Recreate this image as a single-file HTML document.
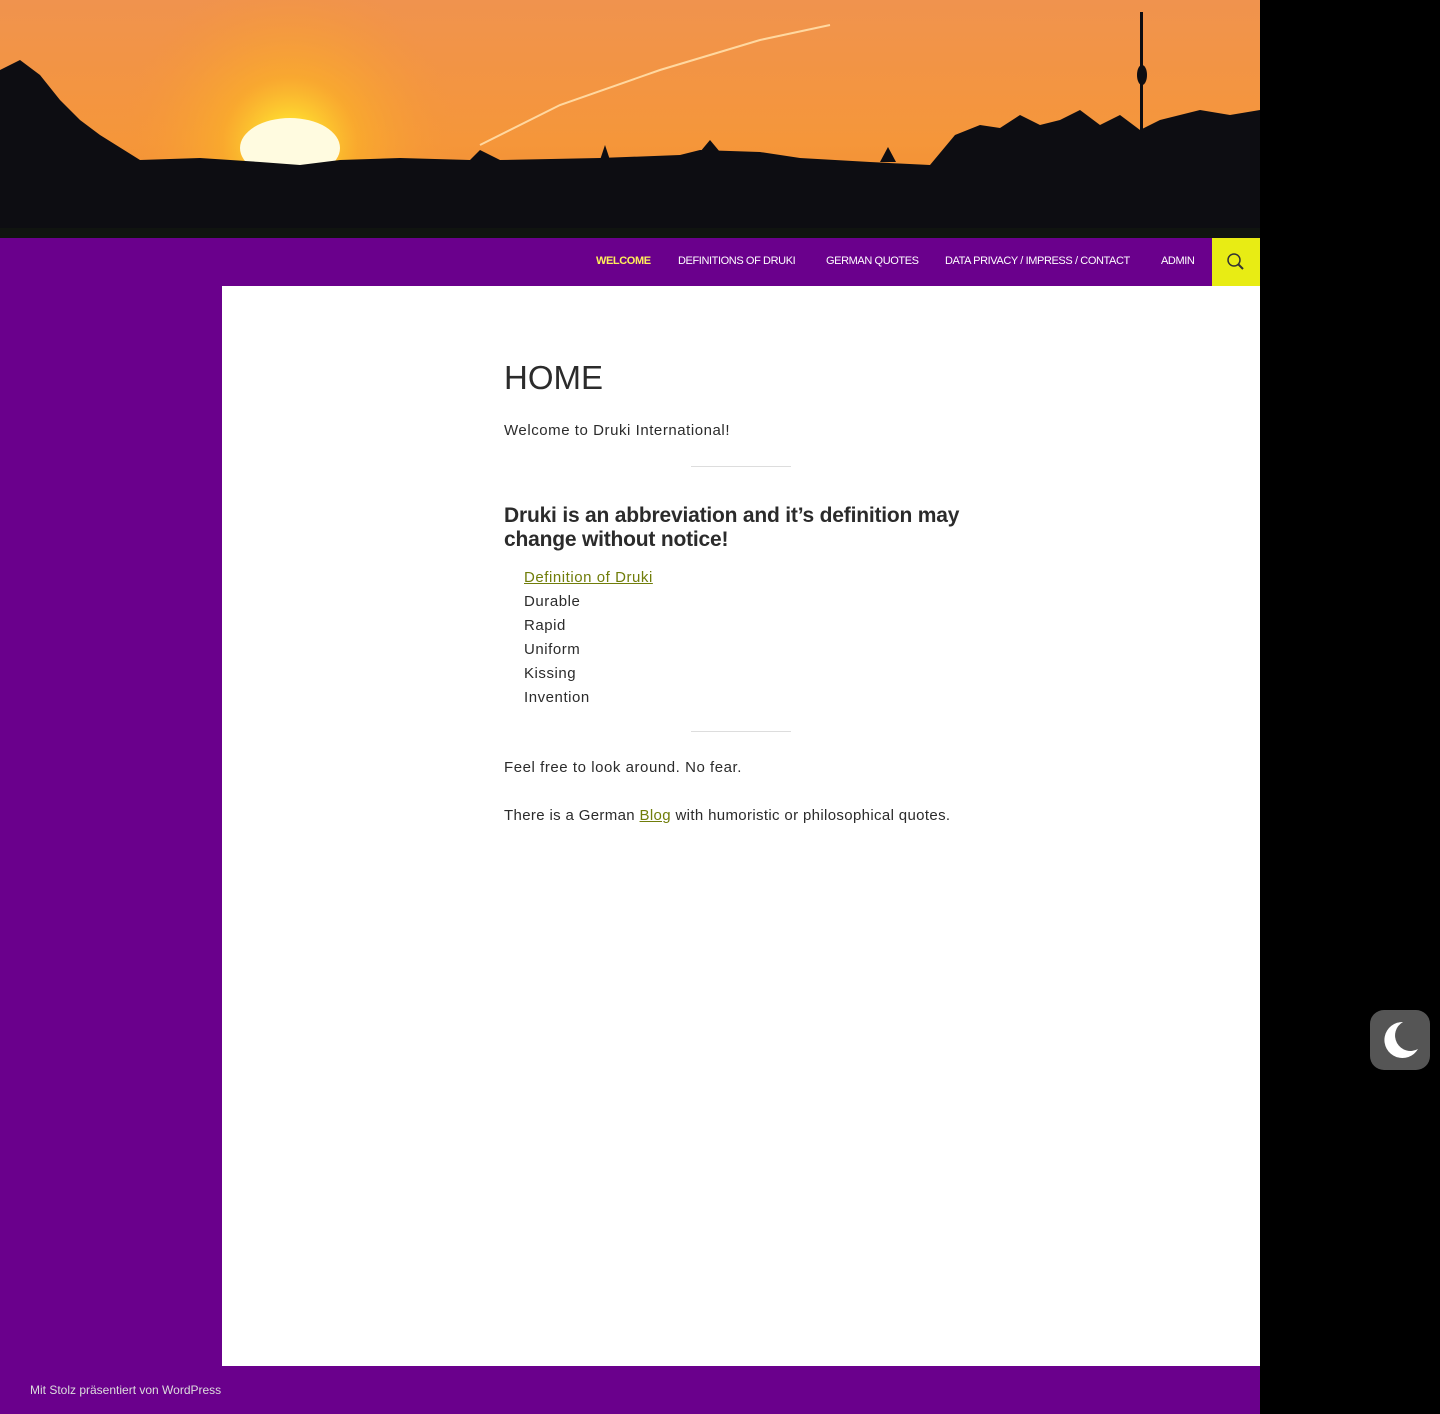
<!DOCTYPE html>
<html><head><meta charset="utf-8"><style>
html,body{margin:0;padding:0}
body{width:1440px;height:1414px;background:#000;position:relative;font-family:"Liberation Sans",sans-serif;overflow:hidden}
#hdr{position:absolute;left:0;top:0;width:1260px;height:238px}
#nav{position:absolute;left:0;top:238px;width:1260px;height:48px;background:#6a008c}
#nav a{position:absolute;top:17px;color:#fff;font-size:11px;text-decoration:none;letter-spacing:-0.4px}
#srch{position:absolute;left:1212px;top:0;width:48px;height:48px;background:#e8ec14}
#side{position:absolute;left:0;top:286px;width:222px;height:1128px;background:#6a008c}
#main{position:absolute;left:222px;top:286px;width:1038px;height:1080px;background:#fff}
#foot{position:absolute;left:222px;top:1366px;width:1038px;height:48px;background:#6a008c}
.c{position:absolute;left:504px;color:#2b2b2b;font-size:15px;letter-spacing:0.55px}
.hr{position:absolute;left:691px;width:100px;height:1px;background:#ddd}
a.l{color:#707d0a;text-decoration:underline}
#moon{position:absolute;left:1370px;top:1010px;width:60px;height:60px;background:#555;border-radius:14px}
</style></head><body>
<svg id="hdr" viewBox="0 0 1260 238" width="1260" height="238">
<defs>
<linearGradient id="sky" x1="0" y1="0" x2="0" y2="1"><stop offset="0" stop-color="#f0934e"/><stop offset="0.6" stop-color="#f5963a"/><stop offset="1" stop-color="#f08a2a"/></linearGradient>
<radialGradient id="sun" cx="290" cy="145" r="170" gradientUnits="userSpaceOnUse"><stop offset="0" stop-color="#fff8d0"/><stop offset="0.12" stop-color="#ffe030"/><stop offset="0.4" stop-color="#fbb028" stop-opacity="0.7"/><stop offset="1" stop-color="#f5963a" stop-opacity="0"/></radialGradient>
</defs>
<rect width="1260" height="238" fill="url(#sky)"/>
<rect width="1260" height="238" fill="url(#sun)"/>
<ellipse cx="290" cy="148" rx="50" ry="30" fill="#fffbe0"/>
<path d="M480 145 L560 105 L660 70 L760 40 L830 25" stroke="#ffd8a0" stroke-width="2" fill="none"/>
<path d="M0 238 L0 70 L20 60 L40 75 L60 100 L80 120 L100 135 L140 160 L200 158 L260 162 L300 165 L340 160 L400 158 L470 160 L480 150 L500 160 L600 158 L680 155 L700 150 L760 152 L800 158 L870 162 L930 165 L955 135 L980 125 L1000 128 L1020 115 L1040 125 L1060 120 L1080 110 L1100 125 L1120 115 L1140 130 L1160 120 L1200 110 L1230 115 L1260 110 L1260 238 Z" fill="#0d0d12"/>
<path d="M600 160 L605 145 L610 160 M700 152 L710 140 L720 152 M880 162 L888 147 L896 162" fill="#0d0d12"/>
<rect x="1140" y="12" width="3" height="130" fill="#0d0d12"/>
<ellipse cx="1142" cy="75" rx="5" ry="10" fill="#0d0d12"/>
<rect x="0" y="228" width="1260" height="10" fill="#101410"/>
</svg>
<div id="nav">
<a style="left:596px;color:#ffef5a;font-weight:bold">WELCOME</a>
<a style="left:678px">DEFINITIONS OF DRUKI</a>
<a style="left:826px">GERMAN QUOTES</a>
<a style="left:945px">DATA PRIVACY / IMPRESS / CONTACT</a>
<a style="left:1161px">ADMIN</a>
<div id="srch"><svg width="48" height="48"><circle cx="22" cy="22" r="6" stroke="#333" stroke-width="1.5" fill="none"/><path d="M26.5 26.5 L31 31" stroke="#333" stroke-width="2"/></svg></div>
</div>
<div id="side"></div>
<div id="main"></div>
<div id="foot"></div>
<div style="position:absolute;left:30px;top:1383px;color:#ddd;font-size:12px">Mit Stolz präsentiert von WordPress</div>
<div class="c" style="top:359px;font-size:33px;font-weight:300;letter-spacing:0px">HOME</div>
<div class="c" style="top:422px">Welcome to Druki International!</div>
<div class="hr" style="top:466px"></div>
<div class="c" style="top:504px;font-size:21px;font-weight:bold;line-height:24px;width:470px;letter-spacing:-0.2px">Druki is an abbreviation and it’s definition may change without notice!</div>
<div class="c" style="left:524px;top:566px;line-height:24px"><a class="l">Definition of Druki</a><br>Durable<br>Rapid<br>Uniform<br>Kissing<br>Invention</div>
<div class="hr" style="top:731px"></div>
<div class="c" style="top:759px">Feel free to look around. No fear.</div>
<div class="c" style="top:807px;letter-spacing:0.35px">There is a German <a class="l">Blog</a> with humoristic or philosophical quotes.</div>
<div id="moon"><svg width="60" height="60"><path d="M33 12 A18 18 0 1 0 48 39 A15 15 0 0 1 33 12 Z" fill="#fff"/></svg></div>
</body></html>
